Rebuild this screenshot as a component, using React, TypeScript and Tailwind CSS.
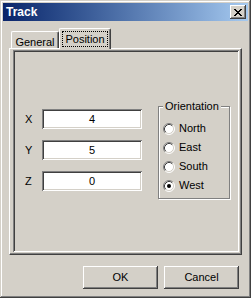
const FONT = "font-['Liberation_Sans',Arial,sans-serif]";

const raised =
  "shadow-[inset_-1px_-1px_#404040,inset_1px_1px_#ffffff,inset_-2px_-2px_#808080,inset_2px_2px_#d4d0c8]";
const sunken =
  "shadow-[inset_1px_1px_#808080,inset_-1px_-1px_#ffffff,inset_2px_2px_#404040,inset_-2px_-2px_#d4d0c8]";

// close glyph, one rect per run of pixels
const closeRuns: [number, number, number][] = [
  [0, 0, 2], [6, 0, 2],
  [1, 1, 2], [5, 1, 2],
  [2, 2, 4],
  [3, 3, 2],
  [2, 4, 4],
  [1, 5, 2], [5, 5, 2],
  [0, 6, 2], [6, 6, 2],
];

function CloseGlyph() {
  return (
    <svg width="8" height="7" viewBox="0 0 8 7" shapeRendering="crispEdges">
      {closeRuns.map(([x, y, w], i) => (
        <rect key={i} x={x} y={y} width={w} height={1} fill="#000" />
      ))}
    </svg>
  );
}

function Radio({ checked }: { checked?: boolean }) {
  return (
    <svg width="12" height="12" viewBox="0 0 12 12">
      <circle cx="6" cy="6" r="5" fill="#fff" />
      <path d="M2.11 9.89A5.5 5.5 0 0 1 9.89 2.11" fill="none" stroke="#808080" strokeWidth="1" />
      <path d="M9.89 2.11A5.5 5.5 0 0 1 2.11 9.89" fill="none" stroke="#ffffff" strokeWidth="1" />
      <path d="M2.82 9.18A4.5 4.5 0 0 1 9.18 2.82" fill="none" stroke="#404040" strokeWidth="1" />
      <path d="M9.18 2.82A4.5 4.5 0 0 1 2.82 9.18" fill="none" stroke="#d4d0c8" strokeWidth="1" />
      {checked && <circle cx="6" cy="6" r="2" fill="#000" />}
    </svg>
  );
}

function Field({ label, value }: { label: string; value: string }) {
  return (
    <div className="flex items-center">
      <span className="w-[17px] text-black">{label}</span>
      <div className={`w-[100px] h-[20px] bg-white flex items-center justify-center text-black ${sunken}`}>
        {value}
      </div>
    </div>
  );
}

export default function App() {
  const dirs = ["North", "East", "South", "West"];

  return (
    <div
      className={`w-[251px] h-[298px] bg-[#d4d0c8] p-[3px] flex flex-col text-[11px] leading-[13px] ${FONT} shadow-[inset_-1px_-1px_#404040,inset_1px_1px_#d4d0c8,inset_-2px_-2px_#808080,inset_2px_2px_#ffffff]`}
    >
      {/* TITLE BAR */}
      <div className="h-[18px] shrink-0 flex items-center justify-between pl-[3px] pr-[2px] bg-gradient-to-r from-[#0a246a] to-[#a6caf0]">
        <span className="text-white font-bold text-[12px]">Track</span>
        <div className={`w-[16px] h-[14px] bg-[#d4d0c8] flex items-center justify-center ${raised}`}>
          <CloseGlyph />
        </div>
      </div>

      {/* TABS */}
      <div className="mt-[7px] ml-[6px] flex flex-col">
        <div className="h-[20px] flex items-end pl-[2px] relative z-10">
          <div className="w-[48px] h-[17px] flex justify-center pt-[4px] border-t border-l border-white rounded-tl-[2px] rounded-tr-[2px] shadow-[inset_-1px_0_#808080] border-r border-r-[#404040] text-black">
            General
          </div>
          <div className="w-[52px] h-[21px] -mb-px bg-[#d4d0c8] flex justify-center pt-[2px] border-t border-l border-white rounded-tl-[2px] rounded-tr-[2px] border-r border-r-[#404040] shadow-[inset_-1px_0_#808080]">
            <div className="h-[16px] px-[2px] flex items-center border border-dotted border-black text-black">
              Position
            </div>
          </div>
        </div>

        {/* PANEL */}
        <div className="w-[233px] h-[207px] border-t border-l border-white border-r border-b border-r-[#404040] border-b-[#404040] shadow-[inset_-1px_-1px_#808080] pl-[3px] pt-[1px]">
          <div className={`w-[226px] h-[202px] flex ${sunken}`}>
            <div className="flex flex-col gap-[11px] pt-[59px] pl-[12px]">
              <Field label="X" value="4" />
              <Field label="Y" value="5" />
              <Field label="Z" value="0" />
            </div>

            <div className="ml-[16px] mt-[56px] relative w-[72px] h-[93px] border border-[#808080] shadow-[inset_1px_1px_#ffffff,1px_1px_#ffffff] pl-[4px] pt-[12px]">
              <span className="absolute top-[-7px] left-[4px] px-[2px] bg-[#d4d0c8] text-black">
                Orientation
              </span>
              {dirs.map((d) => (
                <div key={d} className="h-[19px] flex items-center gap-[4px] text-black">
                  <Radio checked={d === "West"} />
                  <span>{d}</span>
                </div>
              ))}
            </div>
          </div>
        </div>
      </div>

      {/* BUTTONS */}
      <div className="mt-[11px] flex justify-end gap-[6px] pr-[9px]">
        <button className={`w-[75px] h-[23px] bg-[#d4d0c8] text-black ${raised}`}>OK</button>
        <button className={`w-[75px] h-[23px] bg-[#d4d0c8] text-black ${raised}`}>Cancel</button>
      </div>
    </div>
  );
}
